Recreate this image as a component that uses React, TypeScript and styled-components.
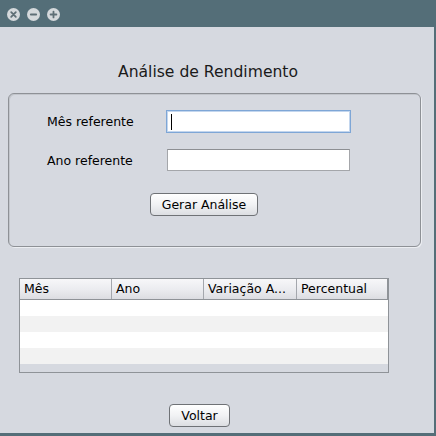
import React from "react";
import styled, { createGlobalStyle } from "styled-components";

const GlobalStyle = createGlobalStyle`
    html, body {
        margin: 0;
        padding: 0;
        background: #546e78;
    }
    * {
        box-sizing: border-box;
    }
`;

const columns = ["Mês", "Ano", "Variação A...", "Percentual"];
const rowCount = 4;

export default function App(): JSX.Element {
    return (
        <>
            <GlobalStyle />
            <Frame>
                <TitleBar>
                    <WindowButton>
                        <svg width="13" height="13" viewBox="0 0 13 13">
                            <circle cx="6.5" cy="6.5" r="6.5" fill="#d5d9dc" />
                            <path d="M4.2 4.2 L8.8 8.8 M8.8 4.2 L4.2 8.8" stroke="#5f6f76" strokeWidth="1.8" strokeLinecap="round" />
                        </svg>
                    </WindowButton>
                    <WindowButton>
                        <svg width="13" height="13" viewBox="0 0 13 13">
                            <circle cx="6.5" cy="6.5" r="6.5" fill="#d5d9dc" />
                            <path d="M3.8 6.5 L9.2 6.5" stroke="#5f6f76" strokeWidth="1.8" strokeLinecap="round" />
                        </svg>
                    </WindowButton>
                    <WindowButton>
                        <svg width="13" height="13" viewBox="0 0 13 13">
                            <circle cx="6.5" cy="6.5" r="6.5" fill="#d5d9dc" />
                            <path d="M3.6 6.5 L9.4 6.5 M6.5 3.6 L6.5 9.4" stroke="#5f6f76" strokeWidth="1.8" strokeLinecap="round" />
                        </svg>
                    </WindowButton>
                </TitleBar>
                <Content>
                    <Title>Análise de Rendimento</Title>
                    <Panel>
                        <FormRow>
                            <Label>Mês referente</Label>
                            <TextField $focused>
                                <Caret />
                            </TextField>
                        </FormRow>
                        <FormRow $gap={16}>
                            <Label>Ano referente</Label>
                            <TextField />
                        </FormRow>
                        <PanelButtonRow>
                            <Button $width={108}>Gerar Análise</Button>
                        </PanelButtonRow>
                    </Panel>
                    <Table>
                        <HeaderRow>
                            {columns.map((c) => (
                                <HeaderCell key={c}>{c}</HeaderCell>
                            ))}
                        </HeaderRow>
                        {Array.from({ length: rowCount }).map((_, i) => (
                            <BodyRow key={i} $odd={i % 2 === 1} />
                        ))}
                    </Table>
                    <BottomBar>
                        <Button $width={61}>Voltar</Button>
                    </BottomBar>
                </Content>
            </Frame>
        </>
    );
}

const uiFont = `"DejaVu Sans", "Noto Sans", sans-serif`;

const Frame = styled.div`
    width: 436px;
    height: 436px;
    display: flex;
    flex-direction: column;
    background: #546e78;
    font-family: ${uiFont};
    color: #000;
`;

const TitleBar = styled.div`
    height: 27px;
    display: flex;
    align-items: center;
    gap: 7px;
    padding: 1px 0 0 7px;
`;

const WindowButton = styled.div`
    width: 13px;
    height: 13px;
    display: flex;
`;

const Content = styled.div`
    flex: 1;
    margin: 0 2px 3px 0;
    background: #d6d9e0;
    display: flex;
    flex-direction: column;
    padding-top: 35px;
`;

const Title = styled.div`
    height: 20px;
    line-height: 20px;
    text-align: center;
    font-size: 15.6px;
    color: #1a1a1a;
    padding-right: 18px;
`;

// Panel styles
const Panel = styled.div`
    margin: 11px 0 0 8px;
    width: 413px;
    height: 154px;
    border: 1px solid #8e9196;
    border-radius: 6px;
    box-shadow: inset 1px 1px 0 #c3c6cc, 1px 1px 0 #eceef2;
    padding: 16px 0 0 38px;
    display: flex;
    flex-direction: column;
`;

const FormRow = styled.div<{ $gap?: number }>`
    display: flex;
    align-items: center;
    margin-top: ${(p) => p.$gap ?? 0}px;
`;

const Label = styled.div`
    width: 119px;
    font-size: 12.5px;
`;

const TextField = styled.div<{ $focused?: boolean }>`
    width: ${(p) => (p.$focused ? 185 : 183)}px;
    height: ${(p) => (p.$focused ? 23 : 22)}px;
    margin-left: ${(p) => (p.$focused ? 0 : 1)}px;
    background: #fff;
    border: 1px solid ${(p) => (p.$focused ? "#7ea6d6" : "#a4a6aa")};
    border-top-color: ${(p) => (p.$focused ? "#7ea6d6" : "#8d8f93")};
    box-shadow: ${(p) => (p.$focused ? "inset 0 0 0 1px #c3d6ee" : "none")};
    display: flex;
    align-items: center;
    padding-left: 4px;
`;

const Caret = styled.div`
    width: 1px;
    height: 16px;
    background: #000;
`;

const PanelButtonRow = styled.div`
    display: flex;
    margin: 22px 0 0 103px;
`;

const Button = styled.div<{ $width: number }>`
    width: ${(p) => p.$width}px;
    height: 23px;
    border: 1px solid #6f7276;
    border-radius: 4px;
    background: linear-gradient(#ffffff, #f1f2f4 50%, #dcdee2);
    font-size: 12.5px;
    display: flex;
    align-items: center;
    justify-content: center;
`;

// Table styles
const Table = styled.div`
    margin: 31px 0 0 19px;
    width: 370px;
    height: 95px;
    border: 1px solid #8f9398;
    display: flex;
    flex-direction: column;
`;

const HeaderRow = styled.div`
    height: 21px;
    display: grid;
    grid-template-columns: 92px 92px 93px 1fr;
    background: linear-gradient(#f7f7f9, #e9eaee 60%, #dcdde2);
    border-bottom: 1px solid #8f9398;
`;

const HeaderCell = styled.div`
    font-size: 12.5px;
    padding-left: 4px;
    line-height: 20px;
    border-right: 1px solid #a4a7ad;
    white-space: nowrap;
    overflow: hidden;

    &:last-child {
        border-right-color: #8f9398;
    }
`;

const BodyRow = styled.div<{ $odd: boolean }>`
    height: 16px;
    background: ${(p) => (p.$odd ? "#f2f2f2" : "#ffffff")};
`;

const BottomBar = styled.div`
    display: flex;
    margin: 31px 0 0 169px;
`;
